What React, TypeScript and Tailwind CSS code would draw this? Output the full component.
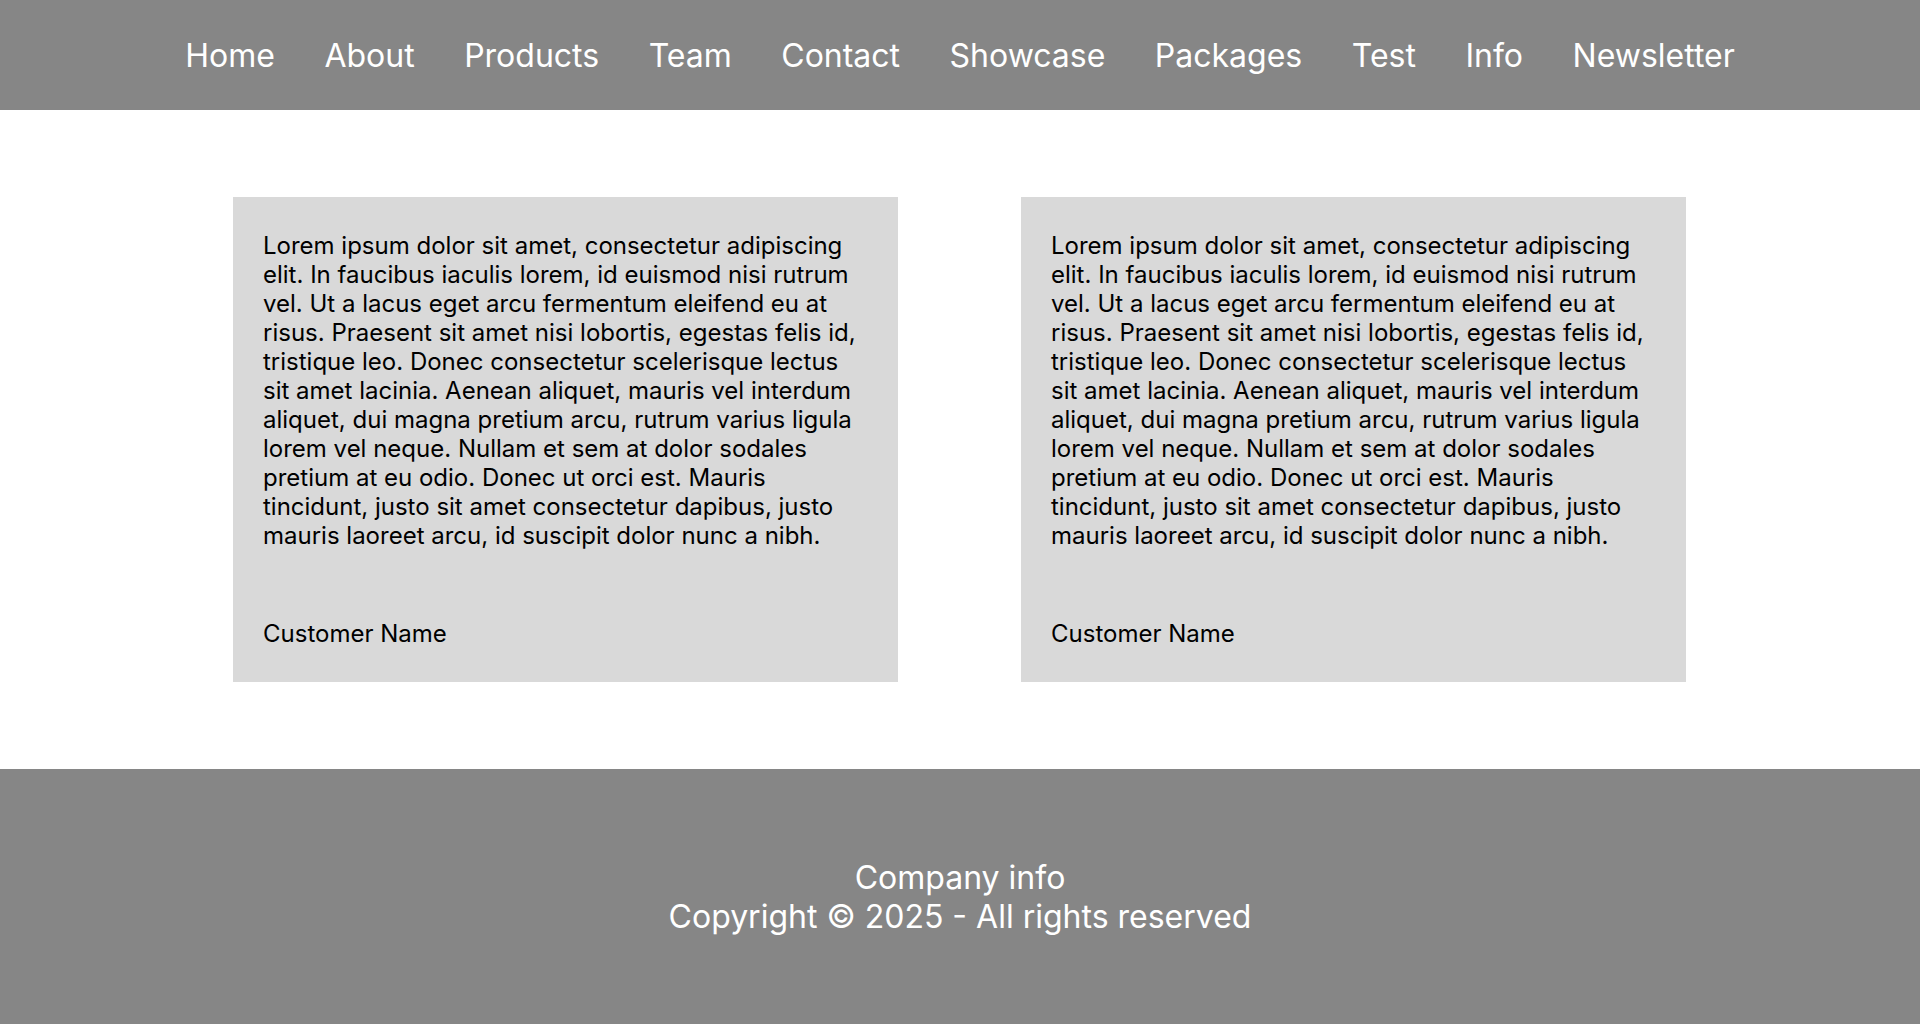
import React from "react";

const items = ["Home", "About", "Products", "Team", "Contact", "Showcase", "Packages", "Test", "Info", "Newsletter"];

const lorem =
  "Lorem ipsum dolor sit amet, consectetur adipiscing elit. In faucibus iaculis lorem, id euismod nisi rutrum vel. Ut a lacus eget arcu fermentum eleifend eu at risus. Praesent sit amet nisi lobortis, egestas felis id, tristique leo. Donec consectetur scelerisque lectus sit amet lacinia. Aenean aliquet, mauris vel interdum aliquet, dui magna pretium arcu, rutrum varius ligula lorem vel neque. Nullam et sem at dolor sodales pretium at eu odio. Donec ut orci est. Mauris tincidunt, justo sit amet consectetur dapibus, justo mauris laoreet arcu, id suscipit dolor nunc a nibh.";

function Card() {
  return (
    <div className="w-[665px] h-[485px] bg-[#d9d9d9] px-[30px] pt-[34px] text-black flex flex-col">
      <p className="text-[24px] leading-[29px]">{lorem}</p>
      <p className="text-[24px] leading-[29px] mt-[69px]">Customer Name</p>
    </div>
  );
}

export default function App() {
  return (
    <div className="min-h-screen bg-white" style={{ fontFamily: "Inter, 'Noto Sans', sans-serif" }}>
      <nav className="h-[110px] bg-[#868686] flex items-center justify-center gap-[49.5px]">
        {items.map((i) => (
          <a key={i} className="text-white text-[32px] leading-[39px]">
            {i}
          </a>
        ))}
      </nav>
      <main className="h-[659px] flex items-center justify-center gap-[123px] pr-[1px]">
        <Card />
        <Card />
      </main>
      <footer className="h-[255px] bg-[#868686] flex flex-col items-center justify-center text-white text-[32px] leading-[39px]">
        <div>Company info</div>
        <div>Copyright © 2025 - All rights reserved</div>
      </footer>
    </div>
  );
}
